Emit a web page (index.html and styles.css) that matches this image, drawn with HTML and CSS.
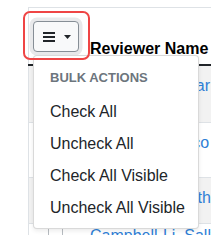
FILE: index.html
```html
<!DOCTYPE html>
<html lang="en">
<head>
<meta charset="utf-8">
<title>Reviewers</title>
<link rel="stylesheet" href="styles.css">
</head>
<body>
<div class="page">
  <table class="grid">
    <thead>
      <tr>
        <th class="c-sel">
          <div class="bulk">
            <button class="btn" type="button" aria-label="Bulk actions">
              <svg class="burger" width="12" height="10" viewBox="0 0 12 10"><rect x="0" y="0" width="12" height="2"/><rect x="0" y="4" width="12" height="2"/><rect x="0" y="8" width="12" height="2"/></svg>
              <svg class="caret" width="7" height="4" viewBox="0 0 7 4"><path d="M0 0h7L3.5 4z"/></svg>
            </button>
            <div class="menu">
              <div class="menu-head">Bulk Actions</div>
              <a class="menu-item">Check All</a>
              <a class="menu-item">Uncheck All</a>
              <a class="menu-item">Check All Visible</a>
              <a class="menu-item">Uncheck All Visible</a>
            </div>
          </div>
        </th>
        <th class="c-name">Reviewer Name</th>
      </tr>
    </thead>
    <tbody>
      <tr class="r1"><td class="c-sel"><span class="chk"></span></td><td class="c-name"><a class="link">Anderson, Oskar</a></td></tr>
      <tr class="r2"><td class="c-sel"><span class="chk"></span></td><td class="c-name"><a class="link">Gutierrez, Marco</a></td></tr>
      <tr class="r3"><td class="c-sel"><span class="chk"></span></td><td class="c-name"><a class="link">Rosen, Elizabeth</a></td></tr>
      <tr class="r4"><td class="c-sel"><span class="chk"></span></td><td class="c-name"><a class="link">Campbell-Li, Sally</a></td></tr>
    </tbody>
  </table>
  <div class="highlight"></div>
</div>
</body>
</html>
```
FILE: styles.css
```css
html, body {
  margin: 0;
  padding: 0;
  background: #fff;
  overflow: hidden;
}
body {
  font-family: "Liberation Sans", Arial, sans-serif;
  font-size: 16px;
  line-height: 24px;
  color: #212529;
}
.page {
  position: relative;
  padding: 7px 0 0 28px;
}
.grid {
  border-collapse: collapse;
  border-top: 1px solid #dee2e6;
  border-left: 1px solid #dee2e6;
  width: max-content;
}
.grid th {
  text-align: left;
  border-bottom: 2px solid #212529;
  font-weight: bold;
  color: #000;
}
th.c-sel {
  width: 48px;
  padding: 13px 4px 12px 4px;
  vertical-align: top;
}
th.c-name {
  vertical-align: bottom;
  padding: 0 40px 3px 5px;
}
.bulk {
  position: relative;
  width: 46px;
}
.btn {
  display: flex;
  align-items: center;
  gap: 9px;
  box-sizing: border-box;
  width: 46px;
  height: 31px;
  margin: 0;
  padding: 0 0 0 9px;
  background: #f8f9fa;
  border: 1px solid #868e96;
  border-radius: 4px;
  box-shadow: 0 0 0 3.5px #e8e9eb;
}
.burger { fill: #212529; display: block; }
.caret { fill: #212529; display: block; }
.menu {
  position: absolute;
  left: 0;
  top: 34px;
  z-index: 5;
  box-sizing: border-box;
  width: 166px;
  padding: 4px 0;
  background: #fff;
  border: 1px solid rgba(0, 0, 0, 0.15);
  border-radius: 4px;
  box-shadow: 0 2px 4px rgba(0, 0, 0, 0.08);
  font-weight: normal;
  text-align: left;
}
.menu-head {
  padding: 8px 16px;
  font-size: 13px;
  line-height: 20px;
  font-weight: bold;
  text-transform: uppercase;
  color: #6c757d;
}
.menu-item {
  display: block;
  padding: 4px 16px;
  color: #212529;
  white-space: nowrap;
}
.grid td {
  vertical-align: top;
  border-top: 1px solid #dee2e6;
}
td.c-sel { padding: 0; }
td.c-name { padding: 8px 5px; white-space: nowrap; }
.r1, .r3 { background: #f2f2f2; }
.r1 td { height: 57px; box-sizing: border-box; }
.r2 td { height: 55px; box-sizing: border-box; }
.r3 td { height: 46px; box-sizing: border-box; }
.r4 td.c-name { padding-top: 0; }
.chk {
  display: block;
  box-sizing: border-box;
  width: 15px;
  height: 15px;
  margin: 1px 0 0 19px;
  border: 1px solid #b7bcc1;
  border-radius: 2px;
  background: #fff;
}
.link {
  color: #2f7fd6;
}
.highlight {
  position: absolute;
  left: 23px;
  top: 11px;
  width: 67px;
  height: 49px;
  box-sizing: border-box;
  border: 2px solid #ef4545;
  border-radius: 7px;
  z-index: 10;
  pointer-events: none;
}
```
